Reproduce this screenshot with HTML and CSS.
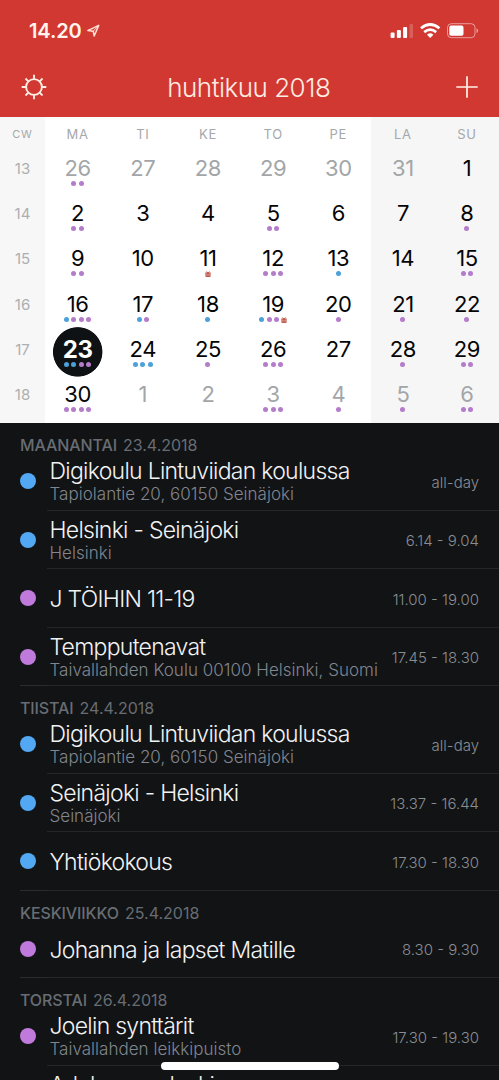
FILE: index.html
```html
<!DOCTYPE html>
<html lang="fi">
<head>
<meta charset="utf-8">
<title>huhtikuu 2018</title>
<link rel="stylesheet" href="styles.css">
</head>
<body>
<svg class="defs" width="0" height="0"><symbol id="gift" viewBox="0 0 6 6"><path d="M.3 1.700h5.400v1.300H.3zM.8 3.300h4.400v2.500H.8z" fill="#d98a7c"/><path d="M.9 3v2.600h4.200V3M3 1.800v3.700M.3 2h5.400M3 1.900 1.500.5M3 1.900 4.500.5" fill="none" stroke="#b84a40" stroke-width=".8"/></symbol></svg>
<div class="screen">
<header class="top">
  <div class="status">
    <span class="clock">14.20</span>
    <svg class="loc" width="15" height="16" viewBox="0 0 15 16"><path d="M1.800 7.600 12.700 2.400 8.200 13 7.200 8.200Z" fill="none" stroke="#ffe0d6" stroke-width="1.500" stroke-linejoin="round"/><path d="M7.200 8.200 12.700 2.400" stroke="#ffe0d6" stroke-width="1"/></svg>
    <svg class="indicators" width="92" height="18" viewBox="0 0 92 18">
      <g fill="#fff"><rect x="1.600" y="10.500" width="4" height="5.500" rx="1"/><rect x="7.900" y="8" width="4" height="8" rx="1"/><rect x="14.100" y="5" width="4" height="11" rx="1"/><rect x="20.500" y="2" width="3.500" height="14" rx="1" opacity=".2"/></g>
      <g fill="none" stroke="#fff" stroke-width="2.700"><path d="M32 6.300Q41.200 -1.300 50.400 6.300"/><path d="M35.200 10.100Q41.200 5.200 47.200 10.100"/></g>
      <path d="M38 12.700Q41.200 10 44.400 12.700L41.200 15.900Z" fill="#fff"/>
      <rect x="58.500" y="1.700" width="27.500" height="14" rx="3.800" fill="none" stroke="#fff" stroke-opacity=".5"/>
      <rect x="60.300" y="3.600" width="14.200" height="10.200" rx="1.800" fill="#fff"/>
      <path d="M87.500 6.300q1.700.6 1.700 2.400t-1.700 2.400z" fill="#fff" opacity=".5"/>
    </svg>
  </div>
  <div class="nav">
    <svg width="26" height="26" viewBox="-13 -13 26 26" fill="none" stroke="#ffece2" stroke-width="1.900"><circle r="7.900"/><path d="M0-8V-12.300M0 8V12.300M8 0H12.300M-8 0H-12.300M5.700-5.700 8.500-8.500M-5.700-5.700-8.500-8.500M5.700 5.700 8.500 8.500M-5.700 5.700-8.500 8.500"/></svg>
    <h1>huhtikuu 2018</h1>
    <svg width="22" height="22" viewBox="0 0 22 22" fill="none" stroke="#fff1e9" stroke-width="1.700"><path d="M11 .3v21.400M.3 11h21.400"/></svg>
  </div>
</header>

<main class="calendar">
  <div class="week names"><span>CW</span><span>MA</span><span>TI</span><span>KE</span><span>TO</span><span>PE</span><span>LA</span><span>SU</span></div>
  <div class="week"><span class="cw">13</span>
    <div class="day out">26<i><b></b><b></b></i></div><div class="day out">27</div><div class="day out">28</div><div class="day out">29</div><div class="day out">30</div><div class="day out">31</div><div class="day">1</div></div>
  <div class="week"><span class="cw">14</span>
    <div class="day">2<i><b></b><b></b></i></div><div class="day">3</div><div class="day">4</div><div class="day">5<i><b></b><b></b></i></div><div class="day">6</div><div class="day">7</div><div class="day">8<i><b></b></i></div></div>
  <div class="week"><span class="cw">15</span>
    <div class="day">9<i><b></b><b></b></i></div><div class="day">10</div><div class="day">11<i><svg><use href="#gift"/></svg></i></div><div class="day">12<i><b></b><b></b><b></b></i></div><div class="day">13<i><b class="blue"></b></i></div><div class="day">14</div><div class="day">15<i><b></b><b></b></i></div></div>
  <div class="week"><span class="cw">16</span>
    <div class="day">16<i><b class="blue"></b><b></b><b></b><b></b></i></div><div class="day">17<i><b class="blue"></b><b></b></i></div><div class="day">18<i><b class="blue"></b></i></div><div class="day">19<i><b class="blue"></b><b></b><b></b><svg><use href="#gift"/></svg></i></div><div class="day">20<i><b></b></i></div><div class="day">21<i><b></b></i></div><div class="day">22<i><b></b></i></div></div>
  <div class="week"><span class="cw">17</span>
    <div class="day today">23<i><b class="blue"></b><b class="blue"></b><b></b><b></b></i></div><div class="day">24<i><b class="blue"></b><b class="blue"></b><b class="blue"></b></i></div><div class="day">25<i><b></b></i></div><div class="day">26<i><b></b><b></b><b></b></i></div><div class="day">27</div><div class="day">28<i><b></b></i></div><div class="day">29<i><b></b><b></b></i></div></div>
  <div class="week"><span class="cw">18</span>
    <div class="day">30<i><b></b><b></b><b></b><b></b></i></div><div class="day out">1</div><div class="day out">2</div><div class="day out">3<i><b></b><b></b><b></b></i></div><div class="day out">4<i><b></b></i></div><div class="day out">5<i><b></b></i></div><div class="day out">6<i><b></b><b></b></i></div></div>
</main>

<section class="agenda">
  <section class="group">
    <h2><span>MAANANTAI</span> 23.4.2018</h2>
    <article><b class="blue"></b><div class="row"><div><h3>Digikoulu Lintuviidan koulussa</h3><p>Tapiolantie 20, 60150 Seinäjoki</p></div><time>all-day</time></div></article>
    <article><b class="blue"></b><div class="row"><div><h3>Helsinki - Seinäjoki</h3><p>Helsinki</p></div><time>6.14 - 9.04</time></div></article>
    <article><b></b><div class="row"><div><h3>J TÖIHIN 11-19</h3></div><time>11.00 - 19.00</time></div></article>
    <article><b></b><div class="row"><div><h3>Tempputenavat</h3><p>Taivallahden Koulu 00100 Helsinki, Suomi</p></div><time>17.45 - 18.30</time></div></article>
  </section>
  <section class="group">
    <h2><span>TIISTAI</span> 24.4.2018</h2>
    <article><b class="blue"></b><div class="row"><div><h3>Digikoulu Lintuviidan koulussa</h3><p>Tapiolantie 20, 60150 Seinäjoki</p></div><time>all-day</time></div></article>
    <article><b class="blue"></b><div class="row"><div><h3>Seinäjoki - Helsinki</h3><p>Seinäjoki</p></div><time>13.37 - 16.44</time></div></article>
    <article><b class="blue"></b><div class="row"><div><h3>Yhtiökokous</h3></div><time>17.30 - 18.30</time></div></article>
  </section>
  <section class="group">
    <h2><span>KESKIVIIKKO</span> 25.4.2018</h2>
    <article><b></b><div class="row"><div><h3>Johanna ja lapset Matille</h3></div><time>8.30 - 9.30</time></div></article>
  </section>
  <section class="group">
    <h2><span>TORSTAI</span> 26.4.2018</h2>
    <article><b></b><div class="row"><div><h3>Joelin synttärit</h3><p>Taivallahden leikkipuisto</p></div><time>17.30 - 19.30</time></div></article>
    <article><b></b><div class="row"><div class="next"><h3>Adelmeena leski</h3></div></div></article>
  </section>
</section>
<div class="home"></div>
</div>
</body>
</html>
```
FILE: styles.css
```css
* { box-sizing: border-box; margin: 0; padding: 0; }
body { font-family: Inter, "Liberation Sans", sans-serif; background: #111315; }
.defs { position: absolute; }
.screen { position: relative; width: 499px; height: 1080px; overflow: hidden; }

.top { height: 117px; background: #d13832; color: #ffece3; }
.status { display: flex; align-items: center; height: 62px; padding: 0 18px 0 29px; }
.clock { font-size: 20px; font-weight: 600; letter-spacing: -.1px; color: #fff3ec; }
.loc { margin-left: 4px; }
.indicators { margin-left: auto; }
.nav { display: flex; align-items: center; justify-content: space-between; height: 50px; padding: 0 21px 0 20.500px; }
h1 { margin-right: 5px; font-size: 26px; font-weight: 300; letter-spacing: -.5px; }

.calendar {
  height: 306px;
  background: linear-gradient(90deg, #f7f7f7 45px, #fff 45px, #fff 371px, #f6f6f6 371px);
}
.week { display: grid; grid-template-columns: 45px repeat(5, 65.2px) repeat(2, 64px); height: 45.2px; text-align: center; }
.names { height: 33px; line-height: 35px; font-size: 13px; letter-spacing: .7px; color: #a5a8aa; }
.names span:first-child { font-size: 11px; }
.cw { font-size: 15px; line-height: 38px; color: #acafb1; }
.day { display: flex; flex-direction: column; align-items: center; padding-top: 4px; font-size: 22px; line-height: 29px; letter-spacing: -.4px; color: #050505; }
.out { color: #a3a6a8; }
.day i { display: flex; gap: 2.300px; height: 5px; margin-top: -2px; }
.day b { width: 5px; height: 5px; border-radius: 50%; background: #b47ccb; }
.day svg { width: 6px; height: 6px; }
.day .blue { background: #4ca1d8; }
.today { height: 51px; margin-top: -4px; padding-top: 8px; color: #fff; font-weight: 700; font-size: 24px; background: radial-gradient(circle at 32.700px 24.900px, #0f1214 24.300px, transparent 25.100px); }

.agenda { color: #f1f2f3; font-weight: 300; }
h2 { height: 29px; padding: 11px 0 0 20px; font-size: 16px; line-height: 22px; font-weight: 400; color: #686d73; }
h2 span { margin-right: 1.500px; font-weight: 500; letter-spacing: -.1px; }
article { display: flex; align-items: center; height: 58.500px; padding-left: 20px; }
article > b { width: 16px; height: 16px; margin-right: 11px; border-radius: 50%; background: #bf7adb; }
article > .blue { background: #52a8f2; }
.row { flex: 1; display: flex; align-items: center; justify-content: space-between; height: 100%; padding: 0 20px 0 2.500px; border-bottom: 1px solid #24272a; }
.row > div { padding-top: 3px; }
.row > .next { align-self: flex-start; padding-top: 7px; }
.group article:last-child { background: linear-gradient(#2a2d30, #2a2d30) 20px 100% / 100% 1px no-repeat; }
h3 { font-size: 23px; line-height: 24px; font-weight: 300; letter-spacing: -.72px; white-space: nowrap; }
p { font-size: 17px; line-height: 22px; letter-spacing: .02px; color: #81868f; white-space: nowrap; }
time { padding-top: 3px; font-size: 15px; color: #898d92; white-space: nowrap; }
.home { position: absolute; left: 160.500px; top: 1062px; width: 178.500px; height: 7.500px; border-radius: 4px; background: #fff; }
```
